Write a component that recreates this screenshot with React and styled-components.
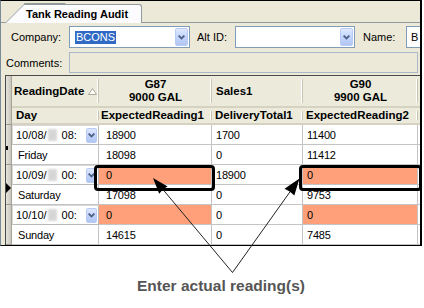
import React from "react";
import styled, { createGlobalStyle } from "styled-components";

const GlobalStyle = createGlobalStyle`
  html, body { margin: 0; padding: 0; background: #fff; }
  body {
    width: 424px;
    height: 308px;
    overflow: hidden;
    font-family: "Liberation Sans", Arial, sans-serif;
    color: #000;
  }
  * { box-sizing: border-box; }
`;

const Page = styled.div`
  position: relative;
  width: 424px;
  height: 308px;
  background: #fff;
`;

const Window = styled.div`
  width: 422px;
  height: 246px;
  background: #ece9d8;
  border-top: 1px solid #000;
  border-right: 2px solid #000;
  border-bottom: 1px solid #000;
  border-left: 1px solid #7a8a99;
  display: flex;
  flex-direction: column;
  overflow: hidden;
`;

const TabStrip = styled.div`
  height: 22px;
  flex: none;
  display: flex;
  align-items: flex-end;
  border-bottom: 1px solid #919b9c;
`;

const Tab = styled.div`
  position: relative;
  z-index: 0;
  width: 137px;
  height: 19px;
  margin-left: 4px;
  margin-bottom: -1px;
  padding-left: 21px;
  display: flex;
  align-items: center;
  font-size: 11px;
  font-weight: bold;
  &::before {
    content: "";
    position: absolute;
    z-index: -1;
    left: 0;
    bottom: 0;
    width: 40px;
    height: 19px;
    background: #fcfcfe;
    border-left: 1px solid #919b9c;
    border-top: 1px solid #919b9c;
    transform: skewX(-45deg);
    transform-origin: bottom left;
  }
  &::after {
    content: "";
    position: absolute;
    z-index: -1;
    left: 19px;
    right: 0;
    top: 0;
    bottom: 0;
    background: #fcfcfe;
    border-top: 1px solid #919b9c;
    border-right: 1px solid #919b9c;
    border-top-right-radius: 3px;
  }
`;

const FormPanel = styled.div`
  display: flex;
  flex-direction: column;
  gap: 4px;
  padding: 3px 0 0 0;
`;

const FieldRow = styled.div`
  display: flex;
  align-items: center;
  height: ${(p) => p.$h}px;
`;

const Label = styled.span`
  flex: none;
  width: ${(p) => p.$w}px;
  margin-left: ${(p) => p.$ml || 0}px;
  font-size: 11px;
  white-space: nowrap;
`;

const Combo = styled.div`
  flex: none;
  width: ${(p) => p.$w}px;
  height: 22px;
  border: 1px solid #7f9db9;
  background: #fff;
  display: flex;
  align-items: center;
  padding: 0 1px 0 5px;
  font-size: 11px;
  overflow: hidden;
`;

const Selected = styled.span`
  background: #316ac5;
  color: #fff;
  line-height: 13px;
  padding: 0 1px;
`;

const DropButton = styled.span`
  flex: none;
  margin-left: auto;
  width: ${(p) => p.$w || 13}px;
  height: ${(p) => p.$h || 18}px;
  border: 1px solid #b8cbf6;
  border-radius: 2px;
  background: linear-gradient(to bottom, #dfe8fe 0%, #c3d4fb 50%, #b2c6f4 100%);
  display: flex;
  align-items: center;
  justify-content: center;
`;

const TextBox = styled.div`
  flex: none;
  width: ${(p) => p.$w}px;
  height: ${(p) => p.$h}px;
  border: 1px solid ${(p) => (p.$disabled ? "#a9b8c9" : "#7f9db9")};
  background: ${(p) => (p.$disabled ? "#ece9d8" : "#fff")};
  font-size: 11px;
  display: flex;
  align-items: center;
  padding-left: 4px;
`;

const GridFrame = styled.div`
  margin: 2px 0 0 4px;
  border-top: 1px solid #4a4a4a;
  border-left: 1px solid #4a4a4a;
  display: grid;
  grid-template-columns: 6px 87px 113px 91px 115px 1fr;
  grid-template-rows: 32px 17px repeat(6, 20px);
  flex: 1;
`;

const SelectorCell = styled.div`
  grid-row: span 2;
  background: linear-gradient(to right, #e4e2dc 0%, #c9c6bd 100%);
  border-bottom: 1px solid #9a978c;
  border-right: 1px solid #a8a597;
  display: flex;
  align-items: center;
  padding-top: ${(p) => p.$pt || 0}px;
`;

const HeaderCell = styled.div`
  position: relative;
  background: #ebeadb;
  border-bottom: 2px solid #d6d2c2;
  font-size: 11.5px;
  font-weight: bold;
  line-height: 13px;
  display: flex;
  align-items: center;
  justify-content: ${(p) => (p.$center ? "center" : "flex-start")};
  text-align: ${(p) => (p.$center ? "center" : "left")};
  padding-left: ${(p) => p.$pl || 0}px;
  white-space: nowrap;
  overflow: hidden;
  &::after {
    content: "";
    position: absolute;
    right: 0;
    top: 3px;
    bottom: 3px;
    width: 1px;
    background: #c7c5b2;
    box-shadow: -1px 0 0 #fff;
  }
`;

const SortMark = styled.svg`
  margin-left: 4px;
  flex: none;
`;

const Cell = styled.div`
  background: ${(p) => (p.$hl ? "#ffa07a" : "#fff")};
  border-right: 1px solid #c4c4c4;
  border-bottom: 1px solid #c4c4c4;
  font-size: 11px;
  letter-spacing: -0.2px;
  display: flex;
  align-items: center;
  padding-left: ${(p) => p.$pl || 4}px;
  white-space: nowrap;
  overflow: hidden;
`;

const DateCell = styled.div`
  background: #fff;
  border: 1px solid #b9b9b9;
  border-top-color: #d8d8d8;
  border-left-color: #d8d8d8;
  font-size: 11px;
  display: flex;
  align-items: center;
  padding: 0 1px 0 3px;
  white-space: nowrap;
`;

const Blur = styled.span`
  display: inline-block;
  width: 9px;
  height: 12px;
  margin: 0 5px 0 1px;
  background: #d6d6d6;
  filter: blur(1.2px);
`;

const FillerCell = styled.div`
  background: ${(p) => (p.$head ? "#ebeadb" : "#fff")};
  border-bottom: ${(p) => (p.$head ? "2px solid #d6d2c2" : "1px solid #c4c4c4")};
`;

const Caption = styled.div`
  margin-top: 31px;
  padding-left: 137px;
  font-size: 15.5px;
  line-height: 18px;
  font-weight: bold;
  color: #555;
  white-space: nowrap;
`;

const Callout = styled.div`
  position: absolute;
  left: ${(p) => p.$x}px;
  top: ${(p) => p.$y}px;
  width: ${(p) => p.$w}px;
  height: ${(p) => p.$h}px;
  border: 3px solid #000;
  border-radius: 4px;
  pointer-events: none;
`;

const Overlay = styled.svg`
  position: absolute;
  left: 0;
  top: 0;
  pointer-events: none;
`;

const Chevron = () => (
  <svg width="7" height="5" viewBox="0 0 7 5">
    <path d="M0.6 0.6 L3.5 3.5 L6.4 0.6" fill="none" stroke="#4d6185" strokeWidth="1.8" />
  </svg>
);

const TickMark = styled.span`
  display: block;
  width: 2px;
  height: 4px;
  background: #000;
`;

const ArrowMark = styled.span`
  display: block;
  width: 0;
  height: 0;
  border-top: 5px solid transparent;
  border-bottom: 5px solid transparent;
  border-left: 5px solid #000;
`;

const records = [
  { date: "10/08/", time: "08:", day: "Friday", marker: "tick", r1: ["18900", "1700", "11400"], r2: ["18098", "0", "11412"], hl: false },
  { date: "10/09/", time: "00:", day: "Saturday", marker: "arrow", r1: ["0", "18900", "0"], r2: ["17098", "0", "9753"], hl: true },
  { date: "10/10/", time: "00:", day: "Sunday", marker: null, r1: ["0", "0", "0"], r2: ["14615", "0", "7485"], hl: true },
];

export default function App() {
  return (
    <Page>
      <GlobalStyle />
      <Window>
        <TabStrip>
          <Tab>Tank Reading Audit</Tab>
        </TabStrip>
        <FormPanel>
          <FieldRow $h={22}>
            <Label $w={58} $ml={10}>Company:</Label>
            <Combo $w={121}>
              <Selected>BCONS</Selected>
              <DropButton><Chevron /></DropButton>
            </Combo>
            <Label $w={38} $ml={7}>Alt ID:</Label>
            <Combo $w={120}>
              <DropButton><Chevron /></DropButton>
            </Combo>
            <Label $w={43} $ml={8}>Name:</Label>
            <TextBox $w={30} $h={22}>B</TextBox>
          </FieldRow>
          <FieldRow $h={21}>
            <Label $w={63} $ml={5}>Comments:</Label>
            <TextBox $w={349} $h={21} $disabled />
          </FieldRow>
        </FormPanel>
        <GridFrame>
          <SelectorCell />
          <HeaderCell $pl={2}>
            ReadingDate
            <SortMark width="9" height="7" viewBox="0 0 9 7">
              <path d="M4.5 0.5 L8.5 6.5 L0.5 6.5 Z" fill="#fff" stroke="#aca899" strokeWidth="1" />
            </SortMark>
          </HeaderCell>
          <HeaderCell $center>G87<br />9000 GAL</HeaderCell>
          <HeaderCell $pl={4}>Sales1</HeaderCell>
          <HeaderCell $center>G90<br />9900 GAL</HeaderCell>
          <FillerCell $head />
          <HeaderCell $pl={4}>Day</HeaderCell>
          <HeaderCell $pl={2}>ExpectedReading1</HeaderCell>
          <HeaderCell $pl={3}>DeliveryTotal1</HeaderCell>
          <HeaderCell $pl={3}>ExpectedReading2</HeaderCell>
          <FillerCell $head />
          {records.map((r) => (
            <React.Fragment key={r.date}>
              <SelectorCell $pt={6}>
                {r.marker === "tick" && <TickMark />}
                {r.marker === "arrow" && <ArrowMark />}
              </SelectorCell>
              <DateCell>
                {r.date}
                <Blur />
                {r.time}
                <DropButton $w={11} $h={15}><Chevron /></DropButton>
              </DateCell>
              <Cell $pl={7} $hl={r.hl}>{r.r1[0]}</Cell>
              <Cell $pl={4}>{r.r1[1]}</Cell>
              <Cell $pl={4} $hl={r.hl}>{r.r1[2]}</Cell>
              <FillerCell />
              <Cell $pl={6}>{r.day}</Cell>
              <Cell $pl={7}>{r.r2[0]}</Cell>
              <Cell $pl={4}>{r.r2[1]}</Cell>
              <Cell $pl={4}>{r.r2[2]}</Cell>
              <FillerCell />
            </React.Fragment>
          ))}
        </GridFrame>
      </Window>
      <Caption>Enter actual reading(s)</Caption>
      <Callout $x={94} $y={165} $w={121} $h={26} />
      <Callout $x={299} $y={165} $w={123} $h={26} />
      <Overlay width="424" height="308" viewBox="0 0 424 308">
        <line x1="232.5" y1="272.5" x2="160" y2="186" stroke="#222" strokeWidth="1" />
        <line x1="232.5" y1="272.5" x2="292" y2="189" stroke="#222" strokeWidth="1" />
        <polygon points="153,178 159.2,193.8 163.3,189 167.6,186.6" fill="#000" />
        <polygon points="299.5,178.5 284.5,188.8 289.7,191.5 294.3,195.4" fill="#000" />
      </Overlay>
    </Page>
  );
}
